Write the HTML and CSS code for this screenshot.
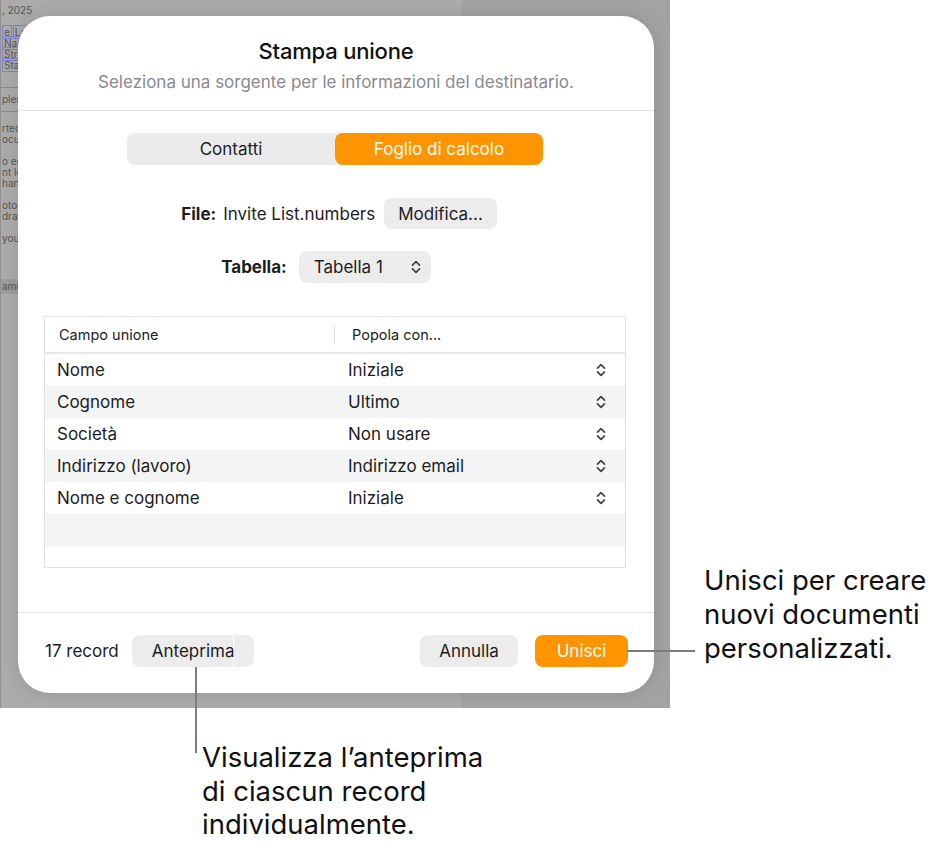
FILE: index.html
```html
<!DOCTYPE html>
<html lang="it">
<head>
    <meta charset="UTF-8">
    <meta name="viewport" content="width=device-width, initial-scale=1.0">
    <title>Stampa unione</title>
    <link rel="stylesheet" href="styles.css">
</head>
<body>

    <div class="figure">
        <div class="screen">
            <div class="doc">
                <div class="doc-line date">, 2025</div>
                <div class="doc-fields">
                    <div class="doc-line"><span class="field">e</span><span class="field">Last</span></div>
                    <div class="doc-line"><span class="field">Name</span></div>
                    <div class="doc-line"><span class="field">Street</span></div>
                    <div class="doc-line"><span class="field">State</span></div>
                </div>
                <div class="doc-band">pler</div>
                <div class="doc-para">
                    <div class="doc-line">rted</div>
                    <div class="doc-line">ocu</div>
                </div>
                <div class="doc-para">
                    <div class="doc-line">o ed</div>
                    <div class="doc-line">nt lo</div>
                    <div class="doc-line">hang</div>
                </div>
                <div class="doc-para">
                    <div class="doc-line">otos</div>
                    <div class="doc-line">dra</div>
                </div>
                <div class="doc-para">
                    <div class="doc-line">you</div>
                </div>
                <div class="doc-name">ame</div>
            </div>
            <div class="desk"></div>

            <div class="sheet">
                <div class="sheet-head">
                    <h1>Stampa unione</h1>
                    <p class="subtitle">Seleziona una sorgente per le informazioni del destinatario.</p>
                </div>

                <div class="sheet-body">
                    <div class="segmented">
                        <button class="segment">Contatti</button>
                        <button class="segment selected">Foglio di calcolo</button>
                    </div>

                    <div class="form-row file-row">
                        <span class="form-label">File:</span>
                        <span class="file-name">Invite List.numbers</span>
                        <button class="btn">Modifica...</button>
                    </div>

                    <div class="form-row table-row">
                        <span class="form-label">Tabella:</span>
                        <button class="btn select">
                            Tabella 1
                            <svg class="updown" width="10" height="14" viewBox="0 0 10 14"><path d="M1.5 5.2 L5 1.7 L8.5 5.2 M1.5 8.8 L5 12.3 L8.5 8.8" fill="none" stroke="#444" stroke-width="1.7" stroke-linecap="round" stroke-linejoin="round"/></svg>
                        </button>
                    </div>

                    <div class="fields">
                        <div class="fields-head">
                            <div class="col-name">Campo unione</div>
                            <div class="col-value">Popola con...</div>
                        </div>
                        <div class="field-row">
                            <div class="col-name">Nome</div>
                            <div class="col-value">Iniziale <svg class="updown" width="10" height="14" viewBox="0 0 10 14"><path d="M1.5 5.2 L5 1.7 L8.5 5.2 M1.5 8.8 L5 12.3 L8.5 8.8" fill="none" stroke="#444" stroke-width="1.7" stroke-linecap="round" stroke-linejoin="round"/></svg></div>
                        </div>
                        <div class="field-row">
                            <div class="col-name">Cognome</div>
                            <div class="col-value">Ultimo <svg class="updown" width="10" height="14" viewBox="0 0 10 14"><path d="M1.5 5.2 L5 1.7 L8.5 5.2 M1.5 8.8 L5 12.3 L8.5 8.8" fill="none" stroke="#444" stroke-width="1.7" stroke-linecap="round" stroke-linejoin="round"/></svg></div>
                        </div>
                        <div class="field-row">
                            <div class="col-name">Società</div>
                            <div class="col-value">Non usare <svg class="updown" width="10" height="14" viewBox="0 0 10 14"><path d="M1.5 5.2 L5 1.7 L8.5 5.2 M1.5 8.8 L5 12.3 L8.5 8.8" fill="none" stroke="#444" stroke-width="1.7" stroke-linecap="round" stroke-linejoin="round"/></svg></div>
                        </div>
                        <div class="field-row">
                            <div class="col-name">Indirizzo (lavoro)</div>
                            <div class="col-value">Indirizzo email <svg class="updown" width="10" height="14" viewBox="0 0 10 14"><path d="M1.5 5.2 L5 1.7 L8.5 5.2 M1.5 8.8 L5 12.3 L8.5 8.8" fill="none" stroke="#444" stroke-width="1.7" stroke-linecap="round" stroke-linejoin="round"/></svg></div>
                        </div>
                        <div class="field-row">
                            <div class="col-name">Nome e cognome</div>
                            <div class="col-value">Iniziale <svg class="updown" width="10" height="14" viewBox="0 0 10 14"><path d="M1.5 5.2 L5 1.7 L8.5 5.2 M1.5 8.8 L5 12.3 L8.5 8.8" fill="none" stroke="#444" stroke-width="1.7" stroke-linecap="round" stroke-linejoin="round"/></svg></div>
                        </div>
                        <div class="field-row empty"></div>
                    </div>
                </div>

                <div class="sheet-foot">
                    <span class="count">17 record</span>
                    <div class="preview-group">
                        <button class="btn preview">Anteprima</button>
                        <span class="preview-tab"></span>
                    </div>
                    <div class="foot-actions">
                        <button class="btn cancel">Annulla</button>
                        <button class="btn primary">Unisci</button>
                    </div>
                </div>
            </div>
        </div>

        <p class="note note-right">Unisci per creare<br>nuovi documenti<br>personalizzati.</p>
        <p class="note note-bottom">Visualizza l’anteprima<br>di ciascun record<br>individualmente.</p>

        <!-- leader lines for the callouts -->
        <span class="leader leader-right"></span>
        <span class="leader leader-bottom"></span>
    </div>

</body>
</html>
```

FILE: styles.css
```css
body {
    margin: 0;
    background: #fff;
    font-family: Inter, "Noto Sans", sans-serif;
    color: #1d1d1f;
}
.figure {
    position: relative;
    width: 943px;
    height: 841px;
    display: grid;
    grid-template-columns: 670px 1fr;
    grid-template-rows: 708px auto;
}

/* dimmed app screenshot */
.screen {
    position: relative;
    display: flex;
    overflow: hidden;
    background: #a6a6a6;
    border-left: 1px solid #8f8f8f;
    box-sizing: border-box;
}
.doc {
    width: 461px;
    background: #ababab;
    color: #555;
    font-size: 10px;
    line-height: 11px;
    padding-top: 5px;
    box-sizing: border-box;
}
.doc-line {
    white-space: nowrap;
    padding-left: 1px;
}
.doc-fields {
    margin-top: 11px;
}
.field {
    border: 1px solid #8282c8;
    padding: 0 1px;
    margin-right: 1px;
}
.doc-band {
    margin-top: 16px;
    padding: 6px 1px;
    border-top: 1px solid #8282c8;
    border-bottom: 1px solid #8282c8;
}
.doc-para {
    margin-top: 11px;
}
.doc-name {
    margin-top: 35px;
    padding: 2px 1px;
    background: #9d9d9d;
}
.desk {
    flex: 1;
    background: #a3a3a3;
}

/* dialog */
.sheet {
    position: absolute;
    left: 17px;
    top: 16px;
    width: 636px;
    height: 677px;
    background: #fff;
    border-radius: 32px;
    box-shadow: 0 0 18px rgba(0, 0, 0, 0.12);
    display: flex;
    flex-direction: column;
}
.sheet-head {
    padding: 22px 0 18px;
    text-align: center;
    border-bottom: 1px solid #e3e3e3;
}
.sheet-head h1 {
    margin: 0;
    font-size: 22px;
    line-height: 26px;
    font-weight: 500;
    letter-spacing: -0.2px;
    color: #111;
}
.subtitle {
    margin: 8px 0 0;
    font-size: 17px;
    line-height: 20px;
    color: #8a8a8e;
}
.sheet-body {
    flex: 1;
    padding: 22px 28px 0 26px;
}
.segmented {
    display: flex;
    width: 416px;
    height: 32px;
    margin: 0 auto;
    background: #ebebeb;
    border-radius: 8px;
}
.segment {
    flex: 1;
    border: none;
    background: none;
    border-radius: 8px;
    font: inherit;
    font-size: 17px;
    color: #1d1d1f;
}
.segment.selected {
    background: #fe9500;
    color: #fff;
}
.form-row {
    display: flex;
    align-items: center;
    justify-content: center;
    font-size: 17px;
}
.form-label {
    font-weight: 700;
}
.file-row {
    margin-top: 33px;
    padding-left: 8px;
}
.file-name {
    margin-left: 7px;
    margin-right: 9px;
}
.table-row {
    margin-top: 22px;
    padding-right: 18px;
}
.table-row .form-label {
    margin-right: 12px;
}
.btn {
    height: 32px;
    border: none;
    border-radius: 8px;
    background: #ececec;
    font: inherit;
    font-size: 17px;
    color: #1d1d1f;
    padding: 0 14px;
}
.file-row .btn {
    height: 31px;
}
.select {
    display: flex;
    align-items: center;
    padding: 0 10px 0 15px;
}
.select .updown {
    margin-left: 28px;
}

/* merge field table */
.fields {
    margin-top: 33px;
    height: 252px;
    border: 1px solid #e1e1e1;
    box-sizing: border-box;
}
.fields-head {
    display: flex;
    align-items: center;
    height: 35px;
    border-bottom: 2px solid #e8e8e8;
    font-size: 14.5px;
    color: #222;
}
.fields-head .col-name {
    width: 290px;
    padding-left: 14px;
    box-sizing: border-box;
    border-right: 1px solid #dedede;
    line-height: 20px;
}
.fields-head .col-value {
    padding-left: 17px;
}
.field-row {
    display: flex;
    align-items: center;
    height: 32px;
    font-size: 17px;
}
.field-row:nth-child(odd) {
    background: #f3f4f4;
}
.field-row .col-name {
    width: 291px;
    padding-left: 12px;
    box-sizing: border-box;
}
.field-row .col-value {
    flex: 1;
    display: flex;
    align-items: center;
    justify-content: space-between;
    padding: 0 19px 0 12px;
}

/* footer */
.sheet-foot {
    height: 81px;
    border-top: 1px solid #e3e3e3;
    display: flex;
    align-items: center;
    padding: 0 26px 4px 27px;
    box-sizing: border-box;
    font-size: 17px;
}
.preview-group {
    display: flex;
    margin-left: 13px;
}
.preview {
    width: 101px;
    padding: 0 0 0 20px;
    text-align: left;
    white-space: nowrap;
    overflow: visible;
    border-radius: 8px 0 0 8px;
}
.preview-tab {
    width: 20px;
    height: 32px;
    margin-left: 1px;
    background: #ececec;
    border-radius: 0 8px 8px 0;
}
.foot-actions {
    margin-left: auto;
    display: flex;
    gap: 17px;
}
.cancel {
    width: 98px;
}
.primary {
    width: 93px;
    background: #fe9500;
    color: #fff;
}

/* callouts */
.note {
    margin: 0;
    font-size: 27.5px;
    line-height: 34px;
    color: #111;
}
.note-right {
    margin-top: 563px;
    padding-left: 34px;
}
.note-bottom {
    grid-column: 1 / 3;
    margin-top: 33px;
    padding-left: 202px;
    line-height: 33.5px;
}
.leader {
    position: absolute;
    background: #7d7d7d;
}
.leader-right {
    left: 627px;
    top: 650px;
    width: 68px;
    height: 2px;
}
.leader-bottom {
    left: 195px;
    top: 667px;
    width: 2px;
    height: 86px;
}
```
